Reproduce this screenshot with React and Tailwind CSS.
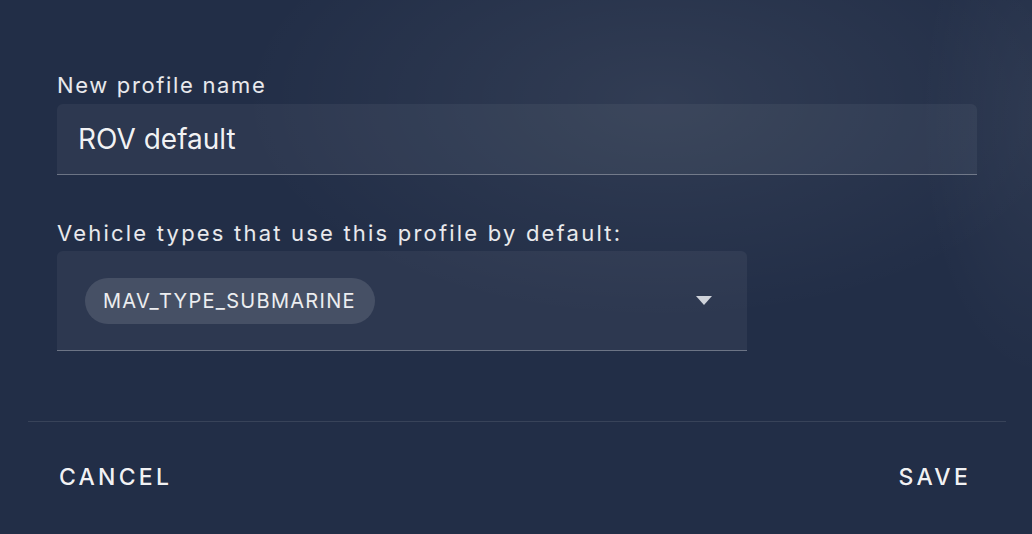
export default function App() {
  return (
    <div
      className="relative h-[534px] w-[1032px] overflow-hidden bg-[#222e47] text-white"
      style={{ fontFamily: "Inter, 'Noto Sans', sans-serif" }}
    >
      {/* soft light blur top right */}
      <div className="pointer-events-none absolute inset-0 bg-[radial-gradient(ellipse_420px_220px_at_660px_100px,rgba(255,255,255,0.07),transparent)]" />
      <div className="pointer-events-none absolute inset-0 bg-[radial-gradient(ellipse_120px_260px_at_1040px_120px,rgba(255,255,255,0.05),transparent)]" />

      <div className="relative flex h-full flex-col">
        <div className="px-[57px] pt-[71px]">
          <label className="block text-[22px] leading-[29px] tracking-[0.075em] text-white/90">New profile name</label>
          <div className="mt-[4px] flex h-[71px] w-[920px] items-center rounded-t-[6px] border-b border-white/30 bg-white/[0.05] px-[21px]">
            <span className="text-[28px] leading-none text-white/95">ROV default</span>
          </div>

          <label className="mt-[44px] block text-[22px] leading-[29px] tracking-[0.1em] text-white/90">
            Vehicle types that use this profile by default:
          </label>
          <div className="mt-[3px] flex h-[100px] w-[690px] items-center justify-between rounded-t-[6px] border-b border-white/30 bg-white/[0.05] pl-[28px] pr-[35px]">
            <span className="flex h-[46px] items-center rounded-full bg-white/[0.12] pl-[18px] pr-[19px] text-[20px] tracking-[0.065em] text-white/90">
              MAV_TYPE_SUBMARINE
            </span>
            <svg width="16" height="10" viewBox="0 0 16 10" className="mt-[1px]">
              <path d="M0 0 L16 0 L8 9 Z" fill="#cfd3da" />
            </svg>
          </div>
        </div>

        <div className="mx-[28px] mt-[70px] h-px w-[978px] bg-white/10" />

        <div className="flex items-center justify-between pl-[59px] pr-[61px] pt-[38px]">
          <button className="text-[23px] font-medium tracking-[0.14em] text-white/95">CANCEL</button>
          <button className="text-[23px] font-medium tracking-[0.14em] text-white/95">SAVE</button>
        </div>
      </div>
    </div>
  );
}
